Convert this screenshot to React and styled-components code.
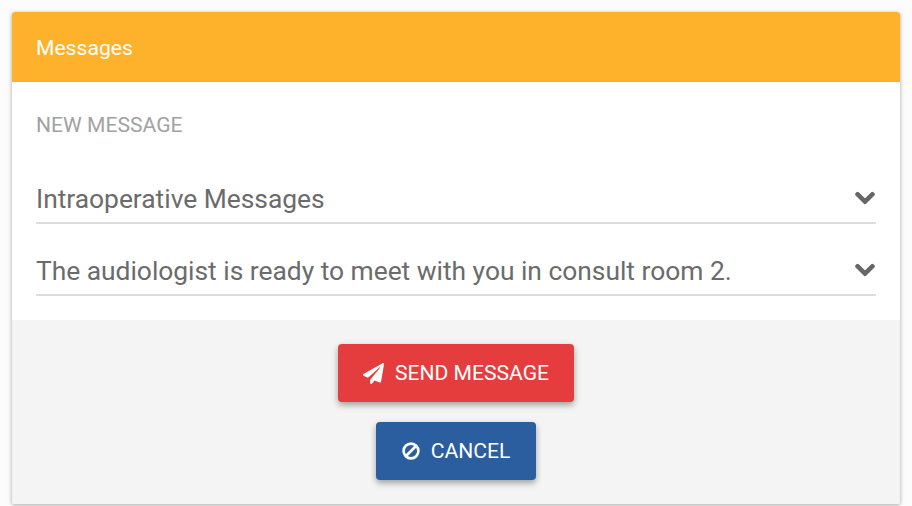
import React from 'react'
import styled, { createGlobalStyle } from 'styled-components'
import { FaPaperPlane, FaChevronDown } from 'react-icons/fa'

const GlobalStyle = createGlobalStyle`
  html, body {
    margin: 0;
    padding: 0;
    background: #fcfcfc;
    font-family: Roboto, "Liberation Sans", sans-serif;
  }
`
const Page = styled.div`
  width: 912px;
  height: 506px;
  padding: 12px 12px 0;
  box-sizing: border-box;
  overflow: hidden;
`
const Card = styled.div`
  width: 888px;
  height: 492px;
  border-radius: 3px;
  overflow: hidden;
  display: flex;
  flex-direction: column;
  background: #fff;
  box-shadow: 0 1px 4px rgba(0, 0, 0, 0.35);
`
const Header = styled.div`
  height: 70px;
  flex-shrink: 0;
  display: flex;
  align-items: center;
  padding: 0 24px;
  background: #feb22c;
  color: #fff;
  font-size: 21.12px;
`
const Body = styled.div`
  height: 238px;
  flex-shrink: 0;
  box-sizing: border-box;
  padding: 32px 24px 0;
`
const Label = styled.div`
  font-size: 21.12px;
  line-height: 22px;
  color: #a2a2a2;
`
const SelectList = styled.div`
  margin-top: 32px;
  display: flex;
  flex-direction: column;
  gap: 16px;
`
const SelectRow = styled.div`
  height: 56px;
  box-sizing: border-box;
  padding-top: 8px;
  display: flex;
  align-items: center;
  justify-content: space-between;
  border-bottom: 2px solid #dddddd;
  color: #6b6b6b;
  font-size: 26.4px;
  letter-spacing: -0.02px;
`
const Chevron = styled(FaChevronDown)`
  width: 22px;
  height: 22px;
  color: #666;
  margin-bottom: 2px;
  stroke: currentColor;
  stroke-width: 24px;
`
const Footer = styled.div`
  flex: 1;
  background: #f4f4f4;
  display: flex;
  flex-direction: column;
  align-items: center;
  padding-top: 24px;
  gap: 20px;
`
const Button = styled.button`
  width: ${({ $width }) => $width}px;
  height: 58px;
  border: none;
  border-radius: 4px;
  display: flex;
  align-items: center;
  justify-content: center;
  gap: 11px;
  padding: 0 0 2px;
  background: ${({ $bg }) => $bg};
  color: #fff;
  font-family: inherit;
  font-size: 21.12px;
  box-shadow: 0 3px 6px rgba(0, 0, 0, 0.35);
`
const PlaneIcon = styled(FaPaperPlane)`
  width: 21px;
  height: 21px;
  margin-top: 2px;
`
const BanIcon = styled.svg`
  width: 18px;
  height: 18px;
  margin-top: 2px;
`

function App() {
  return (
    <Page>
      <GlobalStyle />
      <Card>
        <Header>Messages</Header>
        <Body>
          <Label>NEW MESSAGE</Label>
          <SelectList>
            <SelectRow>
              Intraoperative Messages
              <Chevron />
            </SelectRow>
            <SelectRow>
              The audiologist is ready to meet with you in consult room 2.
              <Chevron />
            </SelectRow>
          </SelectList>
        </Body>
        <Footer>
          <Button $bg="#e53d3e" $width={236}>
            <PlaneIcon />
            SEND MESSAGE
          </Button>
          <Button $bg="#2a5e9e" $width={160}>
            <BanIcon viewBox="0 0 18 18" fill="none" stroke="currentColor" strokeWidth="2.6">
              <circle cx="9" cy="9" r="7.4" />
              <line x1="4" y1="14" x2="14" y2="4" />
            </BanIcon>
            CANCEL
          </Button>
        </Footer>
      </Card>
    </Page>
  )
}

export default App
